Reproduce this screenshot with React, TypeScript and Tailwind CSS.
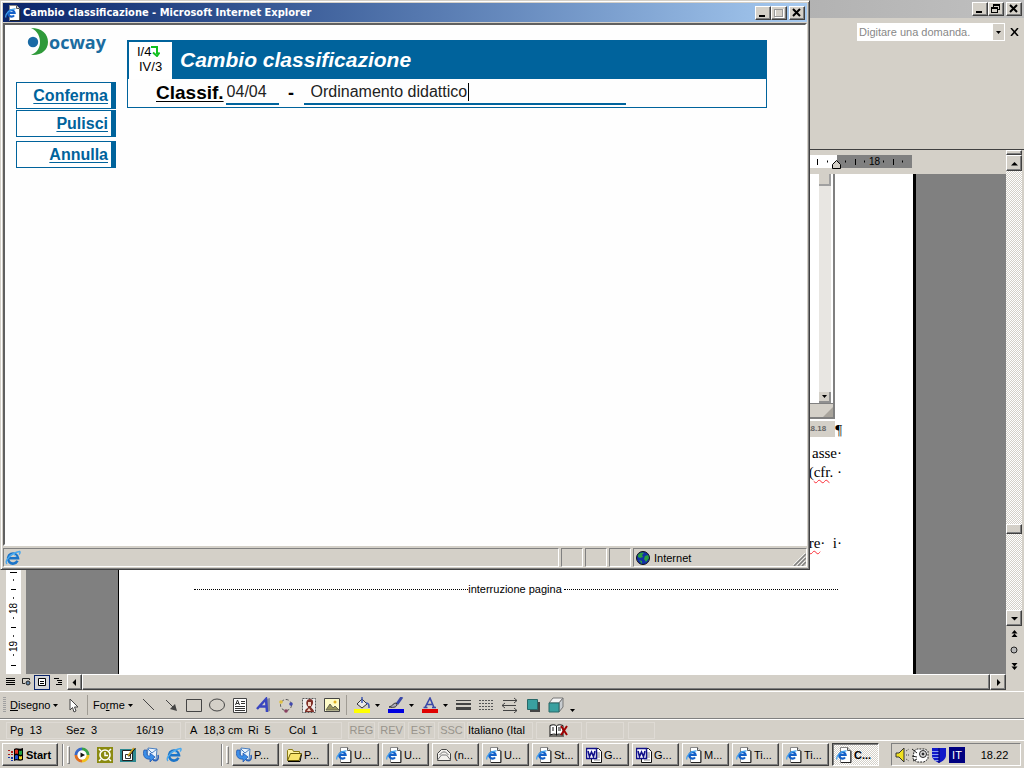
import React, { useState } from 'react';

const raised =
  'bg-[#d4d0c8] border border-t-white border-l-white border-r-[#404040] border-b-[#404040] shadow-[inset_-1px_-1px_#808080]';

const pressed =
  'border border-t-[#404040] border-l-[#404040] border-r-white border-b-white shadow-[inset_1px_1px_#808080]';

const dither = 'bg-[repeating-conic-gradient(#ffffff_0_25%,#d4d0c8_0_50%)] bg-[length:2px_2px]';

type CaptionKind = 'min' | 'max' | 'restore' | 'close';

const CaptionButton: React.FC<{ kind: CaptionKind; label: string }> = ({ kind, label }) => (
  <button type="button" aria-label={label} className={`flex h-[14px] w-4 items-center justify-center ${raised}`}>
    <svg width="12" height="10" viewBox="0 0 12 10" fill="none" stroke="#000" shapeRendering="crispEdges">
      {kind === 'min' && <path d="M2 8h6" strokeWidth="2" />}
      {kind === 'max' && (
        <>
          <path d="M2.5 1.5h8v8h-8z" stroke="#fff" />
          <path d="M1.5 1h8v7.5h-8zM1.5 1.5h8" stroke="#999" />
        </>
      )}
      {kind === 'restore' && (
        <>
          <path d="M3.5 3V.5h6v5H8M3 1.5h7" />
          <path d="M1.5 3.5h6v5h-6zM1 4.5h7" />
        </>
      )}
      {kind === 'close' && <path d="M2 1l7 7M9 1L2 8" strokeWidth="2" shapeRendering="auto" />}
    </svg>
  </button>
);

const IePageIcon = () => (
  <svg width="16" height="16" viewBox="0 0 16 16" fill="none">
    <path d="M4.5.5h7l3 3v12h-10z" fill="#fff" stroke="#888" />
    <path d="M15 4v11.5H5" stroke="#222" />
    <path d="M11.5.5v3h3" fill="#ddd" stroke="#555" />
    <path d="M9 10.3A3.2 3.2 0 1 1 9.6 8H3.500" stroke="#1560c8" strokeWidth="2.2" />
    <path d="M1 12.500C-.5 9.500 5 3.5 10.5 3.8" stroke="#3fa0ee" strokeWidth="1.2" />
  </svg>
);

const IeIcon = () => (
  <svg width="16" height="16" viewBox="0 0 16 16" fill="none">
    <path d="M12.5 10.8A5 5 0 1 1 13 8.2H4" stroke="#1b74c8" strokeWidth="2.6" />
    <path d="M11 6.5A3.5 3.5 0 0 0 4.5 6.5" stroke="#8fd0f8" />
    <path d="M2 14C-1 11 6 3 14.5 1.5c1 .5.5 2-.5 3" stroke="#48a8ee" strokeWidth="1.4" />
  </svg>
);

const OutlookIcon = () => (
  <svg width="16" height="16" viewBox="0 0 16 16">
    <path d="M5 1l9 1-1 11-9-2z" fill="#e8f2fc" stroke="#4a7fc0" />
    <path d="M5 2l4 4 5-4" fill="none" stroke="#4a7fc0" />
    <path d="M1 3c-2 5 1 10 6 9v3l5-5-5-4v3C4 9 3 7 4 3z" fill="#3a8ee8" stroke="#1c4fa8" strokeWidth=".7" />
    <path d="M10 13c4 2 6-1 5-5" fill="none" stroke="#2b62b8" strokeWidth="1.5" />
  </svg>
);

const FolderIcon = () => (
  <svg width="16" height="16" viewBox="0 0 16 16">
    <path d="M1.5 13.5v-10l1-1h4l1 2h6v2" fill="#fff3a0" stroke="#8a7a10" />
    <path d="M1.5 13.5l3-7h11l-2.5 7z" fill="#f8e46c" stroke="#6a5c08" />
    <path d="M2 14.5h12l1.5-7" fill="none" stroke="#000" />
  </svg>
);

const MailOpenIcon = () => (
  <svg width="16" height="16" viewBox="0 0 16 16" fill="#f4f2ee" stroke="#444">
    <path d="M1.5 13.5v-7l4-4h5l4 4v7z" />
    <path d="M1.5 13l4-5h5l4 5M3.5 8l3-3h3l3 3" fill="none" stroke="#777" />
  </svg>
);

const WordIcon = () => (
  <svg width="16" height="16" viewBox="0 0 16 16">
    <path d="M5.5 1.5h7l3 3v11h-10z" fill="#fff" stroke="#111" />
    <path d="M11 6h3M11 8h3M11 10h3M8 13h6" stroke="#888" />
    <path d="M.5 1.5h10v10H.5z" fill="#fff" stroke="#10108a" strokeWidth="1.5" />
    <path d="M2 4l1.5 5.5L5.5 5l2 4.5L9 4" fill="none" stroke="#10108a" strokeWidth="1.6" />
  </svg>
);

const Arrow: React.FC<{ dir?: 'up' | 'down' | 'left' | 'right' }> = ({ dir = 'down' }) => (
  <svg width="7" height="7" viewBox="0 0 7 7" fill="#000">
    {dir === 'up' && <path d="M0 5.5h7L3.5 2z" />}
    {dir === 'down' && <path d="M0 2h7L3.5 5.5z" />}
    {dir === 'left' && <path d="M5 0v7L1.5 3.5z" />}
    {dir === 'right' && <path d="M2 0v7l3.5-3.5z" />}
  </svg>
);

const SmallArrow = () => (
  <svg width="5" height="3" viewBox="0 0 5 3">
    <path d="M0 0h5L2.5 3z" />
  </svg>
);

const DocwayLogo = () => (
  <div className="flex items-center">
    <svg width="22" height="28" viewBox="0 0 22 28">
      <circle cx="6" cy="14" r="5.2" fill="#1a6aa4" />
      <path d="M4 0C15 0 21 6 21 14S14 28 4 27C11 24 13 19 13 14S11 3 4 0z" fill="#2f9a3a" />
    </svg>
    <span className="font-['Open_Sans',sans-serif] text-lg leading-6 font-bold text-[#1b6ca0]">ocway</span>
  </div>
);

const SideButton: React.FC<{ children: React.ReactNode; onClick?: () => void }> = ({ children, onClick }) => (
  <button
    type="button"
    onClick={onClick}
    className="h-[27px] w-full border border-r-5 border-[#00639c] bg-white pr-[3px] text-right text-base leading-6 font-bold text-[#00639c] underline underline-offset-2"
  >
    {children}
  </button>
);

const ExplorerWindow = () => {
  const [code, setCode] = useState('04/04');
  const [description, setDescription] = useState('Ordinamento didattico');

  const clear = () => {
    setCode('');
    setDescription('');
  };

  return (
    <section className="absolute top-0 right-[214px] bottom-[198px] left-0 z-10 flex flex-col border border-t-[#d4d0c8] border-r-[#404040] border-b-[#404040] border-l-[#d4d0c8] bg-[#d4d0c8] p-[2px] shadow-[inset_1px_1px_#ffffff,inset_-1px_-1px_#808080]">
      <header className="flex h-[19px] items-center gap-[2px] bg-linear-to-r from-[#0a246a] to-[#a6caf0] px-[2px]">
        <IePageIcon />
        <h1 className="flex-1 font-['DejaVu_Sans_Condensed','DejaVu_Sans',sans-serif] text-[11px] font-bold text-white">
          Cambio classificazione - Microsoft Internet Explorer
        </h1>
        <div className="flex">
          <CaptionButton kind="min" label="Riduci a icona" />
          <CaptionButton kind="max" label="Ingrandisci" />
        </div>
        <CaptionButton kind="close" label="Chiudi" />
      </header>

      <div className="mt-px flex flex-1 border-2 border-t-[#606060] border-r-white border-b-white border-l-[#606060] bg-[#fefefe] font-['Liberation_Sans',Arial,sans-serif]">
        <nav className="ml-[11px] w-[100px] pt-[3px]">
          <div className="ml-[11px]">
            <DocwayLogo />
          </div>
          <div className="mt-[26px] flex flex-col gap-px">
            <SideButton>Conferma</SideButton>
            <SideButton onClick={clear}>Pulisci</SideButton>
          </div>
          <div className="mt-1">
            <SideButton>Annulla</SideButton>
          </div>
        </nav>

        <main className="mt-[15px] mr-[38px] ml-[11px] h-[68px] flex-1 border border-[#00639c]">
          <div className="flex h-[38px] items-center bg-[#00639c]">
            <div className="ml-px h-[37px] w-[43px] bg-white pt-[2px] pl-2 text-[13px] leading-[15px]">
              <div className="flex items-center">
                I/4
                <svg width="9" height="12" viewBox="0 0 9 12" fill="none" stroke="#10c020" strokeWidth="2">
                  <path d="M0 2h6v7M2 7.5l4 3.5 2.5-3.5" />
                </svg>
              </div>
              <div className="pl-[2px]">IV/3</div>
            </div>
            <h2 className="pb-px pl-2 text-[21px] leading-6 font-bold text-white italic">Cambio classificazione</h2>
          </div>
          <form className="flex items-center pl-7" onSubmit={(e) => e.preventDefault()}>
            <label htmlFor="classif" className="text-[19px] leading-7 font-bold text-black underline underline-offset-2">
              Classif.
            </label>
            <input
              id="classif"
              value={code}
              onChange={(e) => setCode(e.target.value)}
              className="ml-[2px] h-6 w-[53px] border-b-2 border-[#00639c] pl-px text-base text-[#222] outline-none"
            />
            <span className="w-[25px] text-center text-lg font-bold">-</span>
            <div className="flex h-6 w-[322px] items-center border-b-2 border-[#00639c] pl-[7px]">
              <input
                aria-label="Descrizione classificazione"
                value={description}
                onChange={(e) => setDescription(e.target.value)}
                className="field-sizing-content pr-px text-base text-[#222] outline-none"
              />
              <span className="h-[18px] w-px bg-black" />
            </div>
          </form>
        </main>
      </div>

      <footer className="flex h-[21px] items-center gap-[2px] pt-[2px]">
        <div className="flex h-[19px] flex-1 items-center border border-t-[#808080] border-r-white border-b-white border-l-[#808080] pl-px">
          <IeIcon />
        </div>
        {[0, 1, 2].map((i) => (
          <div
            key={i}
            className="h-[19px] w-[22px] border border-t-[#808080] border-r-white border-b-white border-l-[#808080]"
          />
        ))}
        <div className="flex h-[19px] w-[174px] items-center gap-1 border border-t-[#808080] border-r-white border-b-white border-l-[#808080] pl-[2px]">
          <svg width="14" height="14" viewBox="0 0 14 14">
            <circle cx="7" cy="7" r="6.5" fill="#1230a8" stroke="#111" />
            <path d="M2 4c2-3 5-3 6-2L6 4l1 2-3 1-2-1zM9 5l3-1 1 3-3 4-2-3z" fill="#2aa040" />
            <path d="M3 9l3 1v3z" fill="#2aa040" />
          </svg>
          <span className="flex-1">Internet</span>
          <svg width="14" height="14" viewBox="0 0 14 14" stroke="#808080" strokeWidth="1.5" className="self-end">
            <path d="M2 14L14 2M6 14l8-8M10 14l4-4" />
            <path d="M1 13L13 1M5 13l8-8M9 13l4-4" stroke="#fff" strokeWidth=".7" />
          </svg>
        </div>
      </footer>
    </section>
  );
};

const TopRuler = () => (
  <div className="flex h-6 justify-end pt-[5px] pr-[94px]">
    <svg width="112" height="14" viewBox="0 0 112 14">
      <path d="M0 0h37v13H0z" fill="#fff" />
      <path d="M37 0h75v13H37z" fill="#808080" />
      <path d="M17.5 4v6M55.5 4v6M93.5 4v6" stroke="#000" />
      <path d="M27 6.5h1M45 6.5h1M64 6.5h1M83 6.5h1M102 6.5h1" stroke="#000" strokeWidth="2" />
      <text x="69" y="10" className="text-[10px]">
        18
      </text>
      <path d="M32.5 13.5v-4l4-4 4 4v4z" fill="#d4d0c8" stroke="#000" />
    </svg>
  </div>
);

const SideRuler = () => (
  <div className="flex w-[26px] flex-col justify-end pl-[6px]">
    <div className="flex w-[15px] flex-1 items-end bg-white">
      <svg width="15" height="105" viewBox="0 0 15 105">
        <path d="M5 20.5h5M5 58.5h5M5 96.5h5M4 3.5h7" stroke="#000" />
        <path d="M7 11h1M7 29h1M7 49h1M7 67h1M7 86h1" stroke="#000" strokeWidth="1.5" />
        <text transform="translate(11 45) rotate(-90)" className="text-[10px]">
          18
        </text>
        <text transform="translate(11 83) rotate(-90)" className="text-[10px]">
          19
        </text>
      </svg>
    </div>
  </div>
);

const wavy = 'underline decoration-red-500 decoration-wavy decoration-1 underline-offset-2';

const DocumentPage = () => (
  <article className="mr-[90px] ml-[92px] flex flex-1 flex-col border-r-3 border-l border-black bg-white pr-[71px] pl-[75px] font-['Liberation_Serif','Times_New_Roman',serif] text-[15px] leading-[19px] text-black">
    <div className="flex h-[264px] items-end justify-end">
      <div className="flex h-[263px] w-20 flex-col self-start">
        <div className="flex flex-1 justify-end border-r-2 border-[#808080] bg-white pr-[2px]">
          <div className="flex w-3 flex-col justify-between bg-[#e8e6e2]">
            <span className="h-3 border-r-2 border-b-2 border-[#a0a0a0] bg-[#d4d0c8]" />
            <span className="flex h-[11px] items-center justify-center border-r-2 border-b-2 border-[#909090] bg-[#d4d0c8]">
              <SmallArrow />
            </span>
          </div>
        </div>
        <div className="flex h-4 justify-end border-t border-r-2 border-b-2 border-[#808080] bg-[#d4d0c8]">
          <svg width="10" height="10" viewBox="0 0 10 10" className="self-end">
            <path d="M0 10L10 0v10z" fill="#a8a49c" />
          </svg>
        </div>
        <div className="mt-[2px] h-4 bg-[#d4d0c8] pr-[9px] text-right font-['Liberation_Sans',sans-serif] text-[8px] leading-4 font-bold text-[#666]">
          18.18
        </div>
      </div>
      <span className="text-[15px] leading-4">¶</span>
    </div>
    <p className="mt-[6px] text-right">asse·</p>
    <p className="text-right">
      (<span className={wavy}>cfr</span>. ·
    </p>
    <p className="mt-[52px] text-right">
      .<span className={wavy}>re</span>·&nbsp; i·
    </p>
    <div className="mt-[27px] mr-1 flex items-center font-['Liberation_Sans',Arial,sans-serif] text-[11px]">
      <span className="flex-1 border-t border-dotted border-black" />
      <span>interruzione pagina</span>
      <span className="ml-[2px] flex-1 border-t border-dotted border-black" />
    </div>
  </article>
);

const ViewBar = () => (
  <div className="flex h-[17px] items-start">
    <div className="flex h-4 w-[67px] items-center pl-[2px]">
      <button type="button" aria-label="Visualizzazione normale" className="flex w-4 justify-center">
        <svg width="9" height="8" viewBox="0 0 9 8" stroke="#000">
          <path d="M0 .5h9M0 2.5h9M0 4.5h9M0 6.5h9" />
        </svg>
      </button>
      <button type="button" aria-label="Layout Web" className="flex w-4 justify-center">
        <svg width="9" height="8" viewBox="0 0 9 8" fill="none" stroke="#222">
          <path d="M7.5 2V.5h-7v5H3" />
          <circle cx="6" cy="5" r="2" fill="#68a" />
        </svg>
      </button>
      <button
        type="button"
        aria-label="Layout di stampa"
        className="flex h-[15px] w-4 items-center justify-center border border-[#0a246a] bg-[#d4d5d8]"
      >
        <svg width="8" height="8" viewBox="0 0 8 8" fill="#fff" stroke="#000">
          <path d="M.5.5h7v7h-7zM2 3.5h4M2 5.5h4" />
        </svg>
      </button>
      <button type="button" aria-label="Struttura" className="flex w-4 justify-center">
        <svg width="9" height="8" viewBox="0 0 9 8" stroke="#000">
          <path d="M0 .5h5M3 2.5h5M4 4.5h4M2 6.5h6" />
        </svg>
      </button>
    </div>
    <button type="button" aria-label="Scorri a sinistra" className={`flex h-4 w-[15px] items-center justify-center ${raised}`}>
      <Arrow dir="left" />
    </button>
    <div className={`h-4 flex-1 ${raised}`} />
    <button type="button" aria-label="Scorri a destra" className={`flex h-4 w-4 items-center justify-center ${raised}`}>
      <Arrow dir="right" />
    </button>
  </div>
);

const VerticalScroll = () => (
  <div className="mr-[2px] flex w-4 flex-col">
    <div className={`h-[5px] ${raised}`} />
    <button type="button" aria-label="Scorri su" className={`flex h-4 items-center justify-center ${raised}`}>
      <Arrow dir="up" />
    </button>
    <div className={`flex flex-1 flex-col justify-end pb-[76px] ${dither}`}>
      <div className={`h-[10px] ${raised}`} />
    </div>
    <button type="button" aria-label="Scorri giù" className={`flex h-4 items-center justify-center ${raised}`}>
      <Arrow />
    </button>
    <div className="flex h-[65px] flex-col items-center justify-between pt-1 pb-[21px]">
      <svg width="7" height="8" viewBox="0 0 7 8">
        <path d="M.5 3.5h6L3.500 0zM.5 7h6L3.500 3.500zM1 7.500h5" />
      </svg>
      <svg width="8" height="8" viewBox="0 0 8 8">
        <circle cx="4" cy="4" r="3" fill="#b8b8b8" stroke="#222" />
      </svg>
      <svg width="7" height="8" viewBox="0 0 7 8">
        <path d="M.5 1h6L3.500 4.500zM.5 4.500h6L3.500 8z" />
      </svg>
    </div>
  </div>
);

const drawingTools: { label: string; icon: React.ReactNode }[] = [
  { label: 'Linea', icon: <path d="M3 2l11 11" stroke="#444" /> },
  {
    label: 'Freccia',
    icon: (
      <>
        <path d="M3 3l8 8" stroke="#444" />
        <path d="M14 14l-2-7-5 5z" fill="#444" />
      </>
    ),
  },
  { label: 'Rettangolo', icon: <path d="M.5 2.5h15v12H.5z" stroke="#444" /> },
  { label: 'Ovale', icon: <ellipse cx="8" cy="8" rx="7.5" ry="6" stroke="#444" /> },
  {
    label: 'Casella di testo',
    icon: (
      <>
        <path d="M1.5 1.5h13v14h-13z" fill="#fff" stroke="#444" />
        <path d="M3 9.5h10M3 11.5h10M3 13.5h10M9 4.5h4M9 6.5h4M3.5 8l2-5 2 5M4 6.5h3" stroke="#333" />
      </>
    ),
  },
  {
    label: 'WordArt',
    icon: (
      <>
        <path d="M11 2l4-1v13l-3 1z" fill="#8a8c9c" />
        <path d="M2 12L11 2l1 13M5 9.5h6" stroke="#3a46c0" strokeWidth="2.5" />
      </>
    ),
  },
  {
    label: 'Diagramma',
    icon: (
      <>
        <circle cx="8" cy="8" r="5.5" stroke="#555" strokeDasharray="3 2" />
        <circle cx="3" cy="5" r="1.8" fill="#e0c040" />
        <circle cx="8" cy="14" r="1.8" fill="#884060" />
        <circle cx="13" cy="7" r="1.8" fill="#4048b0" />
      </>
    ),
  },
  {
    label: 'ClipArt',
    icon: (
      <>
        <path d="M1.5 1.5h13v14h-13z" fill="#eee" stroke="#555" strokeDasharray="2 1" />
        <path d="M4 15c0-4 3-3 3-5C4 7 5 2 9 2s4 5 1 8c1 2 3 2 3 5z" fill="#803028" />
        <path d="M7 5h3v4H7zM6 14l2-3 2 3z" fill="#f4d4c4" />
      </>
    ),
  },
  {
    label: 'Immagine',
    icon: (
      <>
        <path d="M.5 1.5h15v13H.5z" fill="#fffcc8" stroke="#444" />
        <path d="M2 13l4-6 3 4 2-2 4 4z" fill="#99955c" stroke="#665" />
        <circle cx="11" cy="5" r="1.5" fill="#e0b020" />
      </>
    ),
  },
];

const colorTools = [
  {
    label: 'Colore riempimento',
    bar: '#ffff00',
    icon: (
      <>
        <path d="M3 7l5-5 5 5-5 4z" fill="#e8e8e8" stroke="#333" />
        <path d="M8 6V0M12 6c3 0 3 2 3 5" stroke="#4058b0" strokeWidth="1.5" />
      </>
    ),
  },
  {
    label: 'Colore linea',
    bar: '#0000e0',
    icon: (
      <>
        <path d="M14 0L9 7" stroke="#3a48a8" strokeWidth="3" />
        <path d="M8 6c-3 0-3 3-7 4 5 1 8 0 8-3z" fill="#aab" stroke="#333" />
      </>
    ),
  },
  {
    label: 'Colore carattere',
    bar: '#e00000',
    icon: <path d="M3 10.5L8 1l4 9.5M5 7.5h5M1.5 10.5h4M10 10.5h4" stroke="#3a48a8" strokeWidth="1.6" />,
  },
];

const shapeTools: { label: string; icon: React.ReactNode }[] = [
  {
    label: 'Stile linea',
    icon: (
      <>
        <path d="M0 3.5h15" stroke="#444" />
        <path d="M0 7h15" stroke="#444" strokeWidth="2" />
        <path d="M0 11.5h15" stroke="#444" strokeWidth="3" />
      </>
    ),
  },
  {
    label: 'Stile tratteggio',
    icon: <path d="M0 3.5h15M0 6.5h15M0 9.5h15M0 12.5h15" stroke="#555" strokeDasharray="2 1" />,
  },
  {
    label: 'Stile freccia',
    icon: <path d="M1 3.5h14M12 1l3 2.5L12 6M0 8.5h14M3 6L0 8.5 3 11M1 13.5h14M12 11l3 2.5-3 2.5" stroke="#444" />,
  },
  {
    label: 'Stile ombreggiatura',
    icon: (
      <>
        <path d="M5 5h10v10H5z" fill="#444" />
        <path d="M2.5 2.5h10v10h-10z" fill="#3aa0a0" stroke="#286868" />
      </>
    ),
  },
  {
    label: 'Stile 3D',
    icon: (
      <>
        <path d="M1 6l4-5h10l-4 5z" fill="#f4f4f4" stroke="#777" />
        <path d="M11 6l4-5v9l-4 5z" fill="#c8ccd0" stroke="#777" />
        <path d="M1 6h10v9H1z" fill="#3aa0a0" stroke="#286868" />
      </>
    ),
  },
];

const ToolButton: React.FC<{ label: string; children: React.ReactNode }> = ({ label, children }) => (
  <button type="button" aria-label={label} className="flex w-[23px] justify-center">
    <svg width="16" height="16" viewBox="0 0 16 16" fill="none">
      {children}
    </svg>
  </button>
);

const DrawingToolbar = () => (
  <div className="flex h-7 items-center border-t border-b border-t-white border-b-[#808080] pl-[3px]">
    <span className="mr-1 h-4 w-[3px] bg-[repeating-linear-gradient(#a0a0a0_0_1px,#d4d0c8_1px_2px)]" />
    <button type="button" className="flex w-[50px] items-center gap-[3px]">
      <span>
        <u>D</u>isegno
      </span>
      <SmallArrow />
    </button>
    <button type="button" aria-label="Seleziona oggetti" className="flex w-[27px] justify-center">
      <svg width="10" height="15" viewBox="0 0 10 15" fill="#fff" stroke="#444">
        <path d="M1 1v11l2.5-2.5L5 14l2-1-1.5-4H9z" />
      </svg>
    </button>
    <span className="mr-[5px] h-5 w-px bg-[#a09c94]" />
    <button type="button" className="flex w-10 items-center gap-[3px]">
      <span>
        Fo<u>r</u>me
      </span>
      <SmallArrow />
    </button>
    <div className="ml-[3px] flex">
      {drawingTools.map((tool) => (
        <ToolButton key={tool.label} label={tool.label}>
          {tool.icon}
        </ToolButton>
      ))}
    </div>
    <span className="mx-[3px] h-5 w-px bg-[#a09c94]" />
    {colorTools.map((tool) => (
      <button key={tool.label} type="button" aria-label={tool.label} className="flex w-[34px] items-center">
        <span className="flex w-[23px] justify-center">
          <svg width="16" height="16" viewBox="0 0 16 16" fill="none">
            {tool.icon}
            <path d="M0 12h16v4H0z" fill={tool.bar} />
          </svg>
        </span>
        <span className="ml-[2px]">
          <SmallArrow />
        </span>
      </button>
    ))}
    {shapeTools.map((tool) => (
      <ToolButton key={tool.label} label={tool.label}>
        {tool.icon}
      </ToolButton>
    ))}
    <button type="button" aria-label="Opzioni barra degli strumenti" className="ml-[3px] pt-[10px]">
      <SmallArrow />
    </button>
  </div>
);

const cell = 'flex h-[17px] items-center border border-[#dedad4]';

const StatusBar = () => (
  <div className="flex h-[21px] items-center border-t border-white pl-[6px]">
    <div className={`${cell} w-[175px] pl-[3px]`}>
      <span className="w-14">Pg&nbsp; 13</span>
      <span className="w-[70px]">Sez&nbsp; 3</span>
      <span>16/19</span>
    </div>
    <div className={`${cell} ml-1 w-[157px] pl-1`}>
      <span className="w-[58px]">A&nbsp; 18,3 cm</span>
      <span className="w-[41px]">Ri&nbsp; 5</span>
      <span>Col&nbsp; 1</span>
    </div>
    <div className="ml-[6px] flex gap-[3px] text-[#98948c]">
      {['REG', 'REV', 'EST', 'SSC'].map((mode) => (
        <span key={mode} className={`${cell} w-[27px] justify-center`}>
          {mode}
        </span>
      ))}
    </div>
    <span className={`${cell} ml-[2px] w-[66px] overflow-hidden whitespace-nowrap`}>Italiano (Ital</span>
    <div className={`${cell} ml-[3px] w-[46px] justify-center`}>
      <svg width="20" height="13" viewBox="0 0 20 13" fill="#fff" stroke="#111">
        <path d="M1 1.5c3-1 5-1 6.5.5v9C6 9.5 4 10 1 11zM14 1.5c-3-1-5-1-6.5.5v9c1.5-1.5 3.5-1 6.5 0z" />
        <path d="M0 12h15M3 4h2M3 6h2M9 4h3M9 6h3" />
        <path d="M12 2l6 9M18 2l-6 9" stroke="#a00000" strokeWidth="2" />
      </svg>
    </div>
    <div className={`${cell} ml-1 w-[38px]`} />
    <div className={`${cell} ml-1 w-[27px]`} />
  </div>
);

const tasks: { title: string; icon: React.ReactNode; active?: boolean }[] = [
  { title: 'P...', icon: <OutlookIcon /> },
  { title: 'P...', icon: <FolderIcon /> },
  { title: 'U...', icon: <IePageIcon /> },
  { title: 'U...', icon: <IePageIcon /> },
  { title: '(n...', icon: <MailOpenIcon /> },
  { title: 'U...', icon: <IePageIcon /> },
  { title: 'St...', icon: <IePageIcon /> },
  { title: 'G...', icon: <WordIcon /> },
  { title: 'G...', icon: <WordIcon /> },
  { title: 'M...', icon: <IePageIcon /> },
  { title: 'Ti...', icon: <IePageIcon /> },
  { title: 'Ti...', icon: <IePageIcon /> },
  { title: 'C...', icon: <IePageIcon />, active: true },
];

const Grip = () => (
  <span className="flex gap-[3px]">
    <span className="h-[22px] w-[2px] border-l border-[#808080] bg-white" />
    <span className="h-[18px] w-[3px] self-center border border-t-white border-r-[#808080] border-b-[#808080] border-l-white" />
  </span>
);

const Taskbar = () => (
  <footer className="flex h-7 items-center border-t border-white pr-[3px] pl-[2px]">
    <button type="button" className={`flex h-[23px] w-14 items-center gap-[2px] pl-1 ${raised}`}>
      <svg width="17" height="15" viewBox="0 0 17 15">
        <path d="M7 2c3-2 5 1 9-1v12c-4 2-6-1-9 1z" fill="#000" />
        <path d="M8 3c1-1 2-.5 3 0v4c-1-.5-2-1-3 0z" fill="#e03020" />
        <path d="M12 3.5c1 .5 2 .5 3 0v4c-1 .5-2 .5-3 0z" fill="#20a040" />
        <path d="M8 8.5c1-1 2-.5 3 0v4c-1-.5-2-1-3 0z" fill="#2050d0" />
        <path d="M12 9c1 .5 2 .5 3 0v3c-1 .5-2 .5-3 0z" fill="#f0d020" />
        <path d="M4 4h2v2H4zM1 3h2v1H1zM4 7h2v1H4zM1 7h2v1H1z" fill="#b02018" />
        <path d="M4 10h2v2H4zM1 10h2v1H1zM4 13h2v1H4z" fill="#1838a8" />
      </svg>
      <span className="font-bold">Start</span>
    </button>
    <span className="ml-1">
      <Grip />
    </span>
    <div className="ml-1 flex flex-none gap-[7px]">
      <button type="button" aria-label="Windows Media Player">
        <svg width="16" height="16" viewBox="0 0 16 16" fill="none" strokeWidth="3">
          <path d="M8 2a6 6 0 0 1 6 6" stroke="#38a048" />
          <path d="M14 8a6 6 0 0 1-6 6" stroke="#f0c020" />
          <path d="M8 14a6 6 0 0 1-6-6" stroke="#e07020" />
          <path d="M2 8a6 6 0 0 1 6-6" stroke="#3868c8" />
          <circle cx="8" cy="8" r="4.5" fill="#fff" />
          <path d="M6.5 5.5v5L11 8z" fill="#111" />
        </svg>
      </button>
      <button type="button" aria-label="Outlook">
        <svg width="16" height="16" viewBox="0 0 16 16" fill="none">
          <path d="M0 0h16v16H0z" fill="#8a8a10" />
          <path d="M2 2l2 2M14 2l-2 2M2 14l2-2M14 14l-2-2" stroke="#fff" strokeWidth="1.5" />
          <circle cx="8" cy="8" r="5" stroke="#fff" strokeWidth="1.6" />
          <path d="M8 5v3.5h3" stroke="#fff" strokeWidth="1.5" />
        </svg>
      </button>
      <button type="button" aria-label="Mostra desktop">
        <svg width="16" height="16" viewBox="0 0 16 16">
          <path d="M0 2h16v13H0z" fill="#2c8890" />
          <path d="M2.5 3.5h10v10h-10z" fill="#fff" stroke="#222" />
          <path d="M5.5 7.5h5v4h-5z" fill="none" stroke="#333" />
          <path d="M8 9l6-8" stroke="#c8a020" strokeWidth="2" />
          <path d="M9 9.5L15.5 1" stroke="#111" />
        </svg>
      </button>
      <button type="button" aria-label="Outlook Express">
        <OutlookIcon />
      </button>
      <button type="button" aria-label="Internet Explorer">
        <IeIcon />
      </button>
    </div>
    <span className="ml-[39px]">
      <Grip />
    </span>
    <div className="ml-[3px] flex flex-1 gap-[3px]">
      {tasks.map((task, i) => (
        <button
          key={i}
          type="button"
          className={`flex h-[23px] w-[47px] items-center gap-[2px] overflow-hidden pl-[3px] ${
            task.active ? `${pressed} ${dither} font-bold` : raised
          }`}
        >
          <span className="flex-none">{task.icon}</span>
          {task.title}
        </button>
      ))}
    </div>
    <div className="flex h-[23px] w-[130px] items-center border border-t-[#808080] border-r-white border-b-white border-l-[#808080] pl-[3px]">
      <svg width="16" height="16" viewBox="0 0 16 16" fill="none">
        <path d="M1 6h3l5-5v14L4 10H1z" fill="#f0e020" stroke="#333" />
        <path d="M11 4l3-2M11 8h4M11 12l3 2" stroke="#444" strokeDasharray="1 1" />
      </svg>
      <svg width="18" height="16" viewBox="0 0 18 16" fill="#fff" stroke="#222">
        <path d="M3 4l3-2h8l3 2v8l-4 3H6l-4-3z" strokeDasharray="2 1" />
        <circle cx="12" cy="7" r="3.5" fill="#ddd" />
        <circle cx="12" cy="7" r="1" fill="#222" />
        <path d="M1 2l5 4M1 9l5 1M2 14l4-2" />
      </svg>
      <svg width="16" height="16" viewBox="0 0 16 16" className="ml-[2px]">
        <path d="M1 1h14v7c0 4-3 6-7 8-4-2-7-4-7-8z" fill="#1018c8" />
        <path d="M1 4.5h7M1 7.5h7M2 10.5h6M4 13.5h4" stroke="#8aa0f0" />
        <path d="M8 1v15" stroke="#000060" />
      </svg>
      <span className="ml-[2px] flex h-4 w-4 items-center justify-center bg-[#000080] text-white">IT</span>
      <time className="flex-1 pl-1 text-center">18.22</time>
    </div>
  </footer>
);

export default function App() {
  return (
    <div className="relative flex h-screen min-h-[600px] flex-col overflow-hidden bg-[#d4d0c8] font-['Liberation_Sans',Arial,sans-serif] text-[11px] leading-[14px] text-black">
      <ExplorerWindow />

      <header className="flex h-[18px] items-center justify-end gap-[2px] bg-linear-to-r from-[#808080] to-[#c0c0c0] pr-[2px]">
        <div className="flex">
          <CaptionButton kind="min" label="Riduci a icona Word" />
          <CaptionButton kind="restore" label="Ripristina" />
        </div>
        <CaptionButton kind="close" label="Chiudi Word" />
      </header>

      <div className="flex h-[132px] items-start justify-end border-b border-[#404040] pt-[5px] pr-[5px]">
        <div className="flex h-[18px] w-[148px] bg-white p-px">
          <input
            aria-label="Domanda"
            placeholder="Digitare una domanda."
            className="min-w-0 flex-1 pl-px placeholder:text-[#888]"
          />
          <button type="button" aria-label="Elenco domande" className="flex w-[11px] items-center justify-center bg-[#d4d0c8]">
            <SmallArrow />
          </button>
        </div>
        <button type="button" aria-label="Chiudi finestra" className="ml-[5px] pt-[5px]">
          <svg width="9" height="8" viewBox="0 0 9 8" stroke="#000" strokeWidth="1.5">
            <path d="M1 0l7 8M8 0L1 8" />
          </svg>
        </button>
      </div>

      <div className="flex min-h-0 flex-1">
        <div className="flex flex-1 flex-col">
          <TopRuler />
          <div className="flex min-h-0 flex-1">
            <SideRuler />
            <div className="flex flex-1 bg-[#808080]">
              <DocumentPage />
            </div>
          </div>
          <ViewBar />
        </div>
        <VerticalScroll />
      </div>

      <DrawingToolbar />
      <StatusBar />
      <Taskbar />
    </div>
  );
}
